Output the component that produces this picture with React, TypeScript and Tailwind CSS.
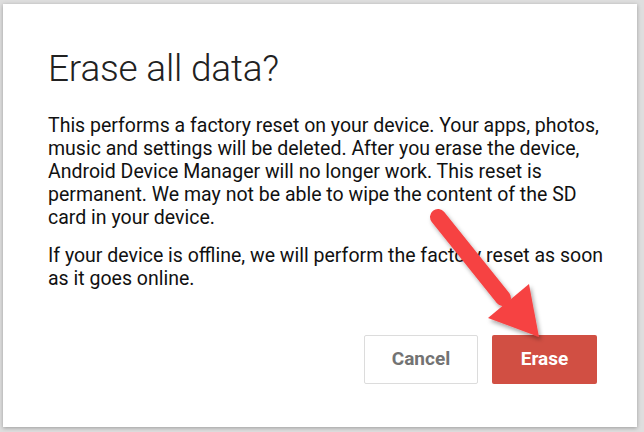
import React from "react";

export default function App() {
  return (
    <div className="relative w-[644px] h-[432px] overflow-hidden bg-[#dedede]" style={{ fontFamily: "Roboto, 'Liberation Sans', sans-serif" }}>
      <div className="absolute left-[3px] top-[4px] w-[634px] h-[423px] bg-white shadow-[0_1px_4px_rgba(0,0,0,0.3)] flex flex-col">
        <div className="pl-[45px] pr-[30px] pt-[43px]">
          <h1 className="text-[37px] leading-[44px] font-light text-[#212121] tracking-[-0.2px]">Erase all data?</h1>
          <p className="mt-[23px] text-[19.5px] leading-[23px] text-[#111]">
            This performs a factory reset on your device. Your apps, photos, music and settings will be deleted. After you erase the device, Android Device Manager will no longer work. This reset is permanent. We may not be able to wipe the content of the SD card in your device.
          </p>
          <p className="mt-[15px] text-[19.5px] leading-[23px] text-[#111]">
            If your device is offline, we will perform the factory reset as soon as it goes online.
          </p>
        </div>
        <div className="mt-auto mb-[43px] flex justify-end gap-[14px] pr-[40px]">
          <button className="w-[114px] h-[49px] rounded-[2px] border border-[#dcdcdc] bg-white text-[19px] font-bold text-[#737373]">Cancel</button>
          <button className="w-[105px] h-[49px] rounded-[2px] bg-[#d14f43] text-[19px] font-bold text-white">Erase</button>
        </div>
      </div>
      <svg className="absolute left-0 top-0" width="644" height="432" viewBox="0 0 644 432">
        <defs>
          <filter id="sh" x="-20%" y="-20%" width="140%" height="140%">
            <feDropShadow dx="2" dy="3" stdDeviation="2" floodColor="#000" floodOpacity="0.35" />
          </filter>
        </defs>
        <g filter="url(#sh)">
          <line x1="438" y1="217" x2="503" y2="298" stroke="#f64343" strokeWidth="16" strokeLinecap="round" />
          <polygon points="488,318 529,284 539,337" fill="#f64343" />
        </g>
      </svg>
    </div>
  );
}
